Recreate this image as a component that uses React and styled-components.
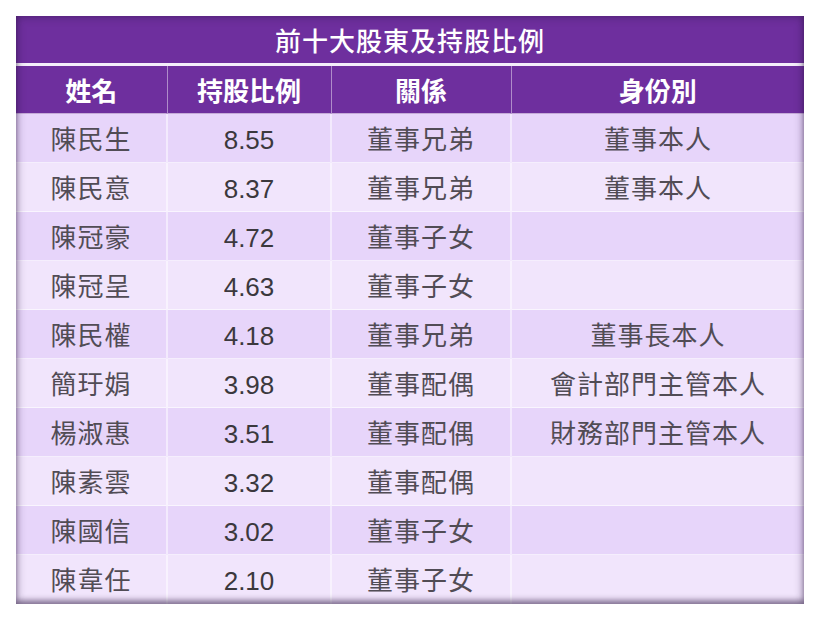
import styled, { createGlobalStyle } from "styled-components";

const GlobalStyle = createGlobalStyle`
  body {
    margin: 0;
    background: #ffffff;
    font-family: "Liberation Sans", "Noto Sans CJK TC", sans-serif;
  }
`;

const Page = styled.div`
  padding: 16px;
`;

const Frame = styled.div`
  position: relative;
  width: 788px;

  &::after {
    content: "";
    position: absolute;
    inset: 0;
    pointer-events: none;
    box-shadow: inset 0 0 10px rgba(40, 20, 60, 0.5), inset 0 -4px 5px rgba(40, 20, 60, 0.35);
  }
`;

const Table = styled.table`
  width: 100%;
  border-collapse: collapse;
  table-layout: fixed;
`;

const Title = styled.th`
  height: 47px;
  padding: 0;
  background: #6e2f9e;
  color: #ffffff;
  font-size: 26px;
  font-weight: 500;
  letter-spacing: 1px;
  border-bottom: 3px solid #f4eefa;
`;

const Head = styled.th`
  height: 47px;
  padding: 0;
  background: #6e2f9e;
  color: #ffffff;
  font-size: 26px;
  font-weight: 700;
  border-left: 1px solid rgba(255, 255, 255, 0.45);
  &:first-child {
    border-left: none;
  }
`;

const Row = styled.tr`
  background: ${({ $alt }) => ($alt ? "#f1e5fc" : "#e7d5fa")};
`;

const Cell = styled.td`
  height: 49px;
  padding: ${({ $num }) => ($num ? "4px 0 0" : "0 0 2px")};
  box-sizing: border-box;
  text-align: center;
  color: ${({ $num }) => ($num ? "#3b383d" : "#514c55")};
  font-size: 26px;
  letter-spacing: ${({ $num }) => ($num ? "0" : "1px")};
  border-left: 2px solid rgba(255, 255, 255, 0.5);
  border-top: 1px solid rgba(255, 255, 255, 0.6);
  &:first-child {
    border-left: none;
  }
`;

const rows = [
  ["陳民生", "8.55", "董事兄弟", "董事本人"],
  ["陳民意", "8.37", "董事兄弟", "董事本人"],
  ["陳冠豪", "4.72", "董事子女", ""],
  ["陳冠呈", "4.63", "董事子女", ""],
  ["陳民權", "4.18", "董事兄弟", "董事長本人"],
  ["簡玗娟", "3.98", "董事配偶", "會計部門主管本人"],
  ["楊淑惠", "3.51", "董事配偶", "財務部門主管本人"],
  ["陳素雲", "3.32", "董事配偶", ""],
  ["陳國信", "3.02", "董事子女", ""],
  ["陳韋任", "2.10", "董事子女", ""],
];

export default function App() {
  return (
    <Page>
      <GlobalStyle />
      <Frame>
        <Table>
          <colgroup>
            <col style={{ width: 151 }} />
            <col style={{ width: 164 }} />
            <col style={{ width: 180 }} />
            <col style={{ width: 293 }} />
          </colgroup>
          <thead>
            <tr>
              <Title colSpan={4}>前十大股東及持股比例</Title>
            </tr>
            <tr>
              <Head>姓名</Head>
              <Head>持股比例</Head>
              <Head>關係</Head>
              <Head>身份別</Head>
            </tr>
          </thead>
          <tbody>
            {rows.map((r, i) => (
              <Row key={r[0]} $alt={i % 2 === 1}>
                {r.map((c, j) => (
                  <Cell key={j} $num={j === 1}>
                    {c}
                  </Cell>
                ))}
              </Row>
            ))}
          </tbody>
        </Table>
      </Frame>
    </Page>
  );
}
